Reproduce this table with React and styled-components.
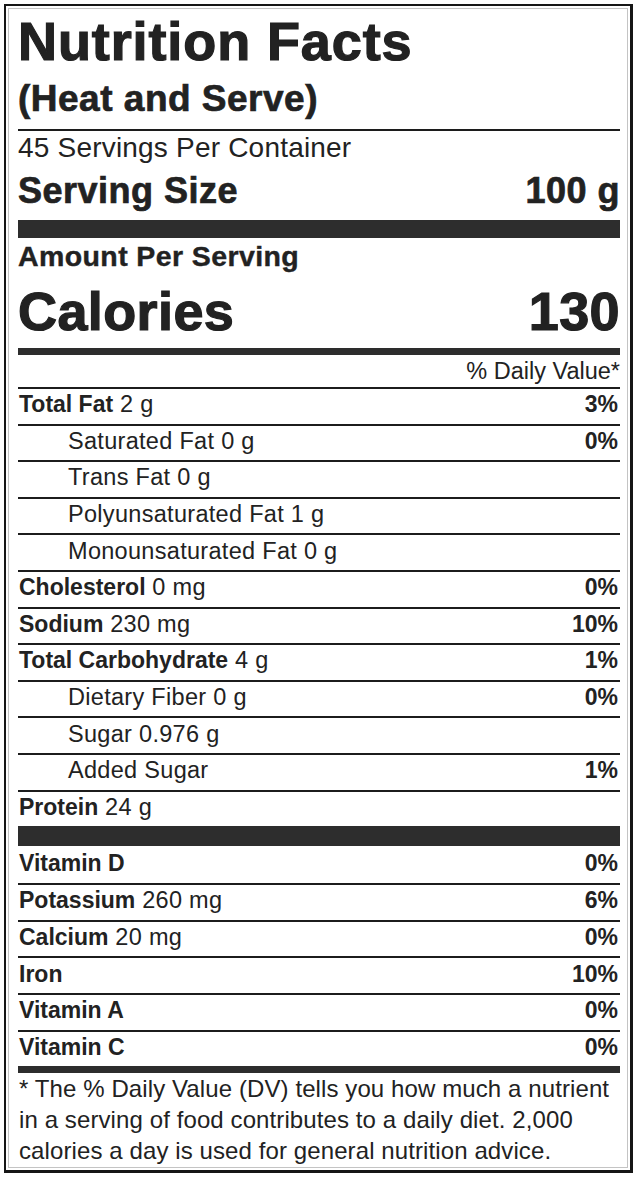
import React from 'react';
import styled, { createGlobalStyle } from 'styled-components';

const GlobalStyle = createGlobalStyle`
  html, body {
    margin: 0;
    padding: 0;
    background: #fff;
  }
  body {
    font-family: "Liberation Sans", Arial, sans-serif;
    color: #222;
  }
`;

const nutrients = [
  { label: 'Total Fat', amount: '2 g', dv: '3%', bold: true },
  { label: 'Saturated Fat', amount: '0 g', dv: '0%', indent: true },
  { label: 'Trans Fat', amount: '0 g', indent: true },
  { label: 'Polyunsaturated Fat', amount: '1 g', indent: true },
  { label: 'Monounsaturated Fat', amount: '0 g', indent: true },
  { label: 'Cholesterol', amount: '0 mg', dv: '0%', bold: true },
  { label: 'Sodium', amount: '230 mg', dv: '10%', bold: true },
  { label: 'Total Carbohydrate', amount: '4 g', dv: '1%', bold: true },
  { label: 'Dietary Fiber', amount: '0 g', dv: '0%', indent: true },
  { label: 'Sugar', amount: '0.976 g', indent: true },
  { label: 'Added Sugar', amount: '', dv: '1%', indent: true },
  { label: 'Protein', amount: '24 g', bold: true },
];

const vitamins = [
  { label: 'Vitamin D', amount: '', dv: '0%' },
  { label: 'Potassium', amount: '260 mg', dv: '6%' },
  { label: 'Calcium', amount: '20 mg', dv: '0%' },
  { label: 'Iron', amount: '', dv: '10%' },
  { label: 'Vitamin A', amount: '', dv: '0%' },
  { label: 'Vitamin C', amount: '', dv: '0%' },
];

export default function App() {
  return (
    <>
      <GlobalStyle />
      <Label>
        <Inner>
          <Title>Nutrition Facts</Title>
          <Subtitle>(Heat and Serve)</Subtitle>
          <Rule />
          <Servings>45 Servings Per Container</Servings>
          <SizeRow>
            <span>Serving Size</span>
            <span>100 g</span>
          </SizeRow>
          <Bar size={18} gap={3} />
          <AmountHead>Amount Per Serving</AmountHead>
          <CaloriesRow>
            <span>Calories</span>
            <span>130</span>
          </CaloriesRow>
          <Bar size={7} />
          <DailyHead>% Daily Value*</DailyHead>
          {nutrients.map(n => (
            <Row key={n.label} indent={n.indent}>
              <span>
                {n.bold ? <Strong>{n.label}</Strong> : n.label}
                {n.amount ? ` ${n.amount}` : ''}
              </span>
              <Percent>{n.dv}</Percent>
            </Row>
          ))}
          <Bar size={20} />
          {vitamins.map((v, i) => (
            <Row key={v.label} first={i === 0}>
              <span>
                <Strong>{v.label}</Strong>
                {v.amount ? ` ${v.amount}` : ''}
              </span>
              <Percent>{v.dv}</Percent>
            </Row>
          ))}
          <Bar size={7} />
          <Footnote>
            * The % Daily Value (DV) tells you how much a nutrient
            <br />
            in a serving of food contributes to a daily diet. 2,000
            <br />
            calories a day is used for general nutrition advice.
          </Footnote>
        </Inner>
      </Label>
    </>
  );
}

const Label = styled.div`
  margin: 4px 0 0 4px;
  width: 629px;
  box-sizing: border-box;
  border: solid #161616;
  border-width: 2px 3px 3px 2px;
  padding: 2px;
`;

const Inner = styled.div`
  box-sizing: border-box;
  border: 1px solid #c4c4c4;
  padding: 0 7px 1px 9px;
  display: flex;
  flex-direction: column;
`;

const Title = styled.div`
  font-size: 54px;
  line-height: 64px;
  font-weight: 700;
  letter-spacing: 0.9px;
  -webkit-text-stroke: 1.2px #222;
  white-space: nowrap;
`;

const Subtitle = styled.div`
  font-size: 37px;
  line-height: 52px;
  font-weight: 700;
  letter-spacing: 0.5px;
  -webkit-text-stroke: 0.7px #222;
  margin-bottom: 4px;
`;

const Rule = styled.div`
  height: 2px;
  background: #1c1c1c;
`;

const Servings = styled.div`
  font-size: 28px;
  line-height: 33px;
  letter-spacing: 0.2px;
`;

const SizeRow = styled.div`
  display: flex;
  justify-content: space-between;
  font-size: 36px;
  line-height: 53px;
  font-weight: 700;
  letter-spacing: 0.5px;
  -webkit-text-stroke: 0.7px #222;
`;

const Bar = styled.div`
  height: ${p => p.size}px;
  margin-top: ${p => p.gap || 0}px;
  background: #2d2d2d;
`;

const AmountHead = styled.div`
  font-size: 28.5px;
  line-height: 36px;
  font-weight: 700;
  letter-spacing: 0.4px;
  -webkit-text-stroke: 0.4px #222;
`;

const CaloriesRow = styled.div`
  display: flex;
  justify-content: space-between;
  font-size: 54px;
  line-height: 74px;
  font-weight: 700;
  letter-spacing: 0.4px;
  -webkit-text-stroke: 1.2px #222;
`;

const DailyHead = styled.div`
  text-align: right;
  font-size: 23.5px;
  line-height: 32px;
`;

const Row = styled.div`
  display: flex;
  justify-content: space-between;
  align-items: center;
  box-sizing: border-box;
  height: ${p => (p.first ? '37px' : '36.6px')};
  padding: 0 2px 3px ${p => (p.indent ? '50px' : '1px')};
  border-top: ${p => (p.first ? 'none' : '2px solid #1c1c1c')};
  font-size: 23.5px;
  letter-spacing: 0.3px;
  white-space: nowrap;
`;

const Strong = styled.strong`
  font-weight: 700;
  font-size: 23px;
  letter-spacing: 0;
`;

const Percent = styled.span`
  font-weight: 700;
  font-size: 23px;
  letter-spacing: 0;
`;

const Footnote = styled.div`
  font-size: 24px;
  line-height: 31px;
  padding-left: 1px;
  letter-spacing: 0.1px;
  white-space: nowrap;
`;
